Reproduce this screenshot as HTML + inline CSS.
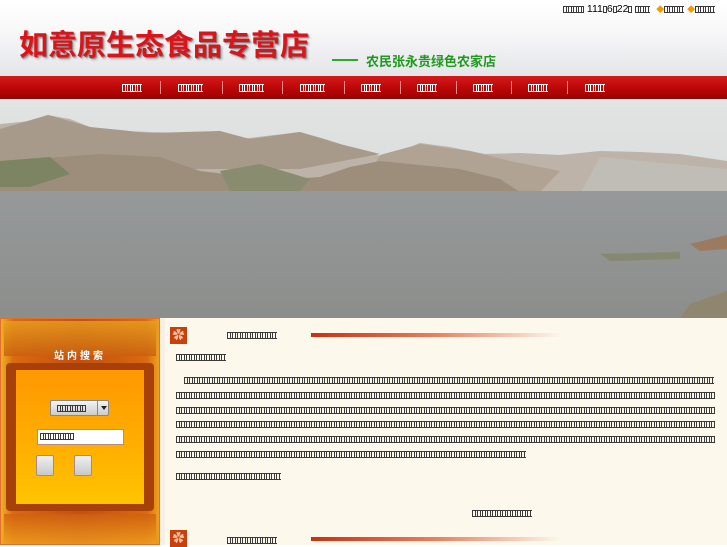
<!DOCTYPE html>
<html><head><meta charset="utf-8"><style>
*{margin:0;padding:0;box-sizing:border-box}
body{width:727px;height:545px;overflow:hidden;position:relative;background:#fff;font-family:"Liberation Sans","Noto Sans CJK SC",sans-serif}
.a{position:absolute;white-space:nowrap}
.b{position:absolute;height:7px;color:transparent;font-size:4px;line-height:7px;overflow:hidden;white-space:nowrap;
background:linear-gradient(90deg,#3a3a3a 1px,transparent 1px 3px,#3a3a3a 3px 4px,transparent 4px) 0 0/5px 7px,linear-gradient(#3a3a3a 1px,transparent 1px 6px,#3a3a3a 6px) 0 0/5px 7px}
.w{height:8px;background:linear-gradient(90deg,#fff 1px,transparent 1px 3px,#fff 3px 4px,transparent 4px) 0 0/5px 8px,linear-gradient(#fff 1px,transparent 1px 7px,#fff 7px) 0 0/5px 8px;top:84px}
.ib{position:relative;display:inline-block;vertical-align:middle}
#hdr{left:0;top:0;width:727px;height:76px;background:linear-gradient(#fff 0%,#f8f8f9 40%,#e4e5e8 100%)}
#nav{left:0;top:76px;width:727px;height:23px;background:linear-gradient(#d61a1a,#b80606 60%,#9c0202);border-bottom:1px solid #7a1010}
.sep{position:absolute;top:81px;width:1px;height:13px;background:#e88}
#left{left:0;top:318px;width:160px;height:227px;background:linear-gradient(90deg,#f0b020,#d86a10 8%,#c25010 50%,#d86a10 92%,#f0a020);border:1px solid #e07030}
#content{left:160px;top:318px;width:567px;height:227px;background:#fcf8ec;border-left:5px solid #f7efe6}
</style></head><body>
<div class="a" id="hdr"></div>
<div class="a" style="left:563px;top:3px;font-size:10.5px;color:#000;line-height:12px">
<span class="b ib" style="width:21px">▯▯▯▯</span> 111<span class="b ib" style="width:4px">▯</span>6<span class="b ib" style="width:4px">▯</span>22<span class="b ib" style="width:4px">▯</span> <span class="b ib" style="width:15px">▯▯▯</span> &nbsp;<span style="color:#f39800;font-size:8px">◆</span><span class="b ib" style="width:20px">▯▯▯▯</span> <span style="color:#f39800;font-size:8px">◆</span><span class="b ib" style="width:20px">▯▯▯▯</span></div>
<div class="a" style="left:19px;top:22px;font-size:29px;font-weight:bold;color:#d9141b;text-shadow:1px 1px 0 #888,2px 2px 2px #aaa">如意原生态食品专营店</div>
<div class="a" style="left:332px;top:59px;width:26px;height:2px;background:#2fa82f"></div>
<div class="a" style="left:366px;top:51px;font-size:13px;font-weight:bold;color:#1f9a1f">农民张永贵绿色农家店</div>
<div class="a" id="nav"></div>
<div class="b w" style="left:122px;width:20px">▯▯▯▯</div><div class="sep" style="left:160px"></div>
<div class="b w" style="left:178px;width:25px">▯▯▯▯▯</div><div class="sep" style="left:222px"></div>
<div class="b w" style="left:239px;width:25px">▯▯▯▯▯</div><div class="sep" style="left:282px"></div>
<div class="b w" style="left:300px;width:25px">▯▯▯▯▯</div><div class="sep" style="left:344px"></div>
<div class="b w" style="left:361px;width:20px">▯▯▯▯</div><div class="sep" style="left:400px"></div>
<div class="b w" style="left:417px;width:20px">▯▯▯▯</div><div class="sep" style="left:456px"></div>
<div class="b w" style="left:473px;width:20px">▯▯▯▯</div><div class="sep" style="left:511px"></div>
<div class="b w" style="left:528px;width:20px">▯▯▯▯</div><div class="sep" style="left:567px"></div>
<div class="b w" style="left:585px;width:20px">▯▯▯▯</div>
<svg class="a" style="left:0;top:99px" width="727" height="219" viewBox="0 0 727 219">
<defs><linearGradient id="s" x1="0" y1="0" x2="0" y2="1"><stop offset="0" stop-color="#e2e4e4"/><stop offset="1" stop-color="#cfd2d2"/></linearGradient>
<linearGradient id="w" x1="0" y1="0" x2="0" y2="1"><stop offset="0" stop-color="#96999a"/><stop offset="1" stop-color="#8c8e8c"/></linearGradient></defs>
<rect width="727" height="219" fill="url(#s)"/>
<polygon points="0,25 30,22 48,16 70,20 90,28 120,32 180,34 220,32 240,40 300,33 325,40 355,50 385,58 420,44 450,48 485,55 520,54 560,56 600,52 640,53 680,55 727,62 727,95 0,95" fill="#bdb3a8"/>
<polygon points="0,30 48,16 90,28 150,34 220,32 250,40 300,33 340,45 380,55 300,70 0,70" fill="#a89a8a"/>
<polygon points="380,56 420,45 470,52 510,62 560,72 540,93 360,93" fill="#b0a393"/>
<polygon points="0,62 60,58 100,55 160,58 200,72 250,78 290,80 320,78 350,68 380,62 420,66 460,70 500,80 520,93 0,93" fill="#9c8e7a"/>
<polygon points="0,62 50,58 70,75 30,88 0,88" fill="#7c8463"/>
<polygon points="220,72 260,65 310,80 300,92 230,92" fill="#8a8c70"/>
<polygon points="600,58 727,70 727,95 580,95" fill="#c0bcb6"/>
<rect y="92" width="727" height="127" fill="url(#w)"/>
<polygon points="690,145 727,136 727,150 700,152" fill="#9c7a60"/>
<polygon points="600,155 680,153 680,160 610,162" fill="#868870"/>
<polygon points="690,205 727,192 727,219 680,219" fill="#8f8670"/>
</svg>
<div class="a" id="left">
<div class="a" style="left:3px;top:2px;width:152px;height:35px;background:linear-gradient(#e8a020,#c86010);opacity:.8"></div>
<div class="a" style="left:53px;top:28px;font-size:10px;font-weight:bold;color:#fff;letter-spacing:3px">站内搜索</div>
<div class="a" style="left:5px;top:44px;width:148px;height:148px;background:#a8400a;border-radius:4px"></div>
<div class="a" style="left:15px;top:51px;width:128px;height:134px;background:linear-gradient(#ff9800,#ffb000 60%,#ffc400)"></div>
<div class="a" style="left:49px;top:81px;width:59px;height:16px;background:linear-gradient(#f4f4f4,#ccc);border:1px solid #888;border-radius:2px"></div>
<div class="b" style="left:56px;top:86px;width:29px">▯▯▯▯▯▯</div>
<div class="a" style="left:96px;top:82px;width:1px;height:14px;background:#888"></div>
<div class="a" style="left:100px;top:87px;border:3px solid transparent;border-top:4px solid #222"></div>
<div class="a" style="left:36px;top:110px;width:87px;height:16px;background:#fff;border:1px solid #b88"></div>
<div class="b" style="left:39px;top:114px;width:34px">▯▯▯▯▯▯▯</div>
<div class="a" style="left:35px;top:136px;width:18px;height:21px;background:linear-gradient(#f0f0f0,#c8c8c8);border:1px solid #a88;border-radius:2px"></div>
<div class="a" style="left:73px;top:136px;width:18px;height:21px;background:linear-gradient(#f0f0f0,#c8c8c8);border:1px solid #a88;border-radius:2px"></div>
<div class="a" style="left:3px;top:195px;width:152px;height:30px;background:linear-gradient(#d06010,#f0a020);opacity:.8"></div>
</div>
<div class="a" id="content"></div>
<div class="a" style="left:170px;top:327px;width:17px;height:17px;background:#c8400c;color:#f8c0a0;font-size:12px;text-align:center;line-height:17px">✿</div>
<div class="b" style="left:227px;top:332px;width:50px">▯▯▯▯▯▯▯▯▯▯</div>
<div class="a" style="left:311px;top:333px;width:250px;height:4px;background:linear-gradient(90deg,#c83010,#e88060 50%,#fcf8ec)"></div>
<div class="b" style="left:176px;top:354px;width:50px">▯▯▯▯▯▯▯▯▯▯</div>
<div class="b" style="left:184px;top:377px;width:530px">▯▯▯▯▯▯▯▯▯▯▯▯▯▯▯▯▯▯▯▯▯▯▯▯▯▯▯▯▯▯▯▯▯▯▯▯▯▯▯▯▯▯▯▯▯▯▯▯▯▯▯▯▯▯▯▯▯▯▯▯▯▯▯▯▯▯▯▯▯▯▯▯▯▯▯▯▯▯▯▯▯▯▯▯▯▯▯▯▯▯▯▯▯▯▯▯▯▯▯▯▯▯▯▯▯▯</div>
<div class="b" style="left:176px;top:392px;width:539px">▯▯▯▯▯▯▯▯▯▯▯▯▯▯▯▯▯▯▯▯▯▯▯▯▯▯▯▯▯▯▯▯▯▯▯▯▯▯▯▯▯▯▯▯▯▯▯▯▯▯▯▯▯▯▯▯▯▯▯▯▯▯▯▯▯▯▯▯▯▯▯▯▯▯▯▯▯▯▯▯▯▯▯▯▯▯▯▯▯▯▯▯▯▯▯▯▯▯▯▯▯▯▯▯▯▯▯▯</div>
<div class="b" style="left:176px;top:407px;width:539px">▯▯▯▯▯▯▯▯▯▯▯▯▯▯▯▯▯▯▯▯▯▯▯▯▯▯▯▯▯▯▯▯▯▯▯▯▯▯▯▯▯▯▯▯▯▯▯▯▯▯▯▯▯▯▯▯▯▯▯▯▯▯▯▯▯▯▯▯▯▯▯▯▯▯▯▯▯▯▯▯▯▯▯▯▯▯▯▯▯▯▯▯▯▯▯▯▯▯▯▯▯▯▯▯▯▯▯▯</div>
<div class="b" style="left:176px;top:421px;width:539px">▯▯▯▯▯▯▯▯▯▯▯▯▯▯▯▯▯▯▯▯▯▯▯▯▯▯▯▯▯▯▯▯▯▯▯▯▯▯▯▯▯▯▯▯▯▯▯▯▯▯▯▯▯▯▯▯▯▯▯▯▯▯▯▯▯▯▯▯▯▯▯▯▯▯▯▯▯▯▯▯▯▯▯▯▯▯▯▯▯▯▯▯▯▯▯▯▯▯▯▯▯▯▯▯▯▯▯▯</div>
<div class="b" style="left:176px;top:436px;width:539px">▯▯▯▯▯▯▯▯▯▯▯▯▯▯▯▯▯▯▯▯▯▯▯▯▯▯▯▯▯▯▯▯▯▯▯▯▯▯▯▯▯▯▯▯▯▯▯▯▯▯▯▯▯▯▯▯▯▯▯▯▯▯▯▯▯▯▯▯▯▯▯▯▯▯▯▯▯▯▯▯▯▯▯▯▯▯▯▯▯▯▯▯▯▯▯▯▯▯▯▯▯▯▯▯▯▯▯▯</div>
<div class="b" style="left:176px;top:451px;width:350px">▯▯▯▯▯▯▯▯▯▯▯▯▯▯▯▯▯▯▯▯▯▯▯▯▯▯▯▯▯▯▯▯▯▯▯▯▯▯▯▯▯▯▯▯▯▯▯▯▯▯▯▯▯▯▯▯▯▯▯▯▯▯▯▯▯▯▯▯▯▯</div>
<div class="b" style="left:176px;top:473px;width:105px">▯▯▯▯▯▯▯▯▯▯▯▯▯▯▯▯▯▯▯▯▯</div>
<div class="b" style="left:472px;top:510px;width:60px">▯▯▯▯▯▯▯▯▯▯▯▯</div>
<div class="a" style="left:170px;top:530px;width:17px;height:17px;background:#c8400c;color:#f8c0a0;font-size:12px;text-align:center;line-height:17px">✿</div>
<div class="b" style="left:227px;top:537px;width:50px">▯▯▯▯▯▯▯▯▯▯</div>
<div class="a" style="left:311px;top:537px;width:250px;height:4px;background:linear-gradient(90deg,#c83010,#e88060 50%,#fcf8ec)"></div>
</body></html>
